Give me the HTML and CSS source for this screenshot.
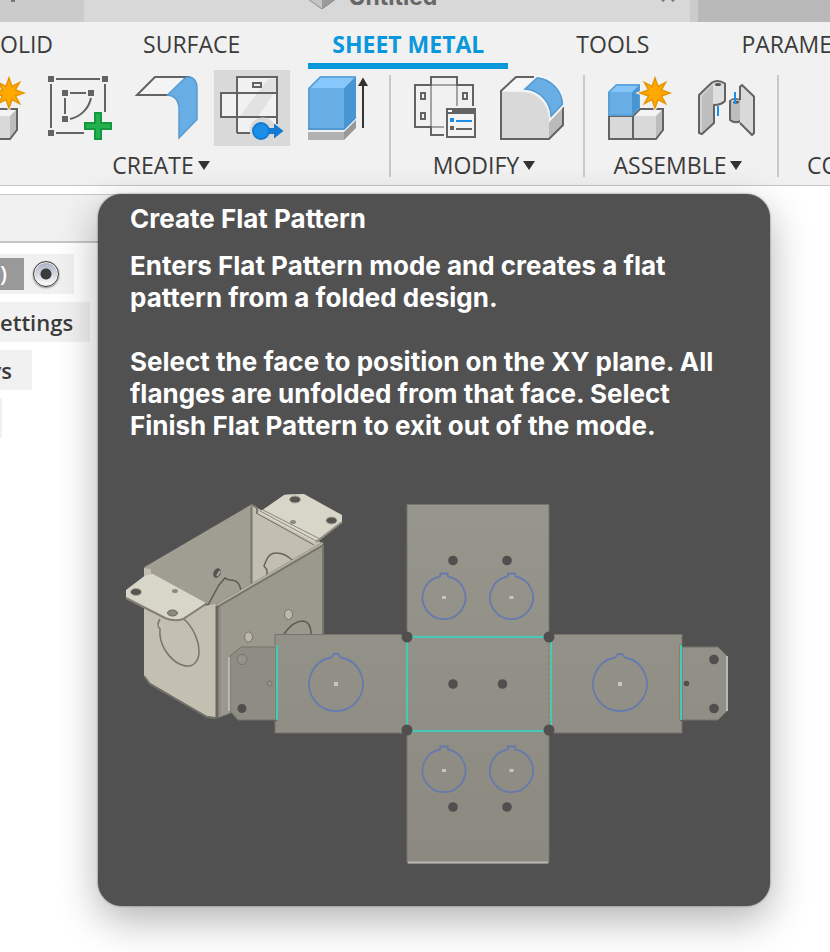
FILE: index.html
```html
<!DOCTYPE html>
<html lang="en">
<head>
<meta charset="utf-8">
<meta name="viewport" content="width=device-width, initial-scale=1">
<title>Untitled</title>
<link rel="stylesheet" href="styles.css">
</head>
<body>
<svg class="sprite" aria-hidden="true">
  <symbol id="new-component" viewBox="0 0 64 64">
    <path d="M1 40V63H25V40z" fill="#d9d9d9" stroke="#636363" stroke-width="2"/>
    <path d="M25 40L33 33H55.500V54L48 63H25z" fill="#d9d9d9"/>
    <path d="M25 40L33 33H55L48 40z" fill="#f4f4f4"/>
    <path d="M48 40L55 33V54L48 63z" fill="#bdbdbd"/>
    <path d="M25 40L32 33H55V54L48 63H25z" fill="none" stroke="#636363" stroke-width="2"/>
    <path d="M0 16H24V40H0z" fill="#68ade4"/>
    <path d="M0 16L8 8H32L24 16z" fill="#86c5f7"/>
    <path d="M24 16L32 8V32L24 40z" fill="#4694d1"/>
    <path d="M1 40V16L8.500 9H31V32L24 39H1" fill="none" stroke="#559cd3" stroke-width="1.500"/>
    <path d="M47 0L50.500 9.500L59 5L54.500 13.500L64 17L54.500 20.500L59 29L50.500 24.500L47 34L43.500 24.500L35 29L39.500 20.500L30 17L39.500 13.500L35 5L43.500 9.500z" fill="#f1f1f1" stroke="#f1f1f1" stroke-width="2"/>
    <path d="M47 2L50 10.500L57.500 6.500L53.500 14L62 17L53.500 20L57.500 27.500L50 23.500L47 32L44 23.500L36.500 27.500L40.500 20L32 17L40.500 14L36.500 6.500L44 10.500z" fill="#ffa800" stroke="#e69500" stroke-width="1.500"/>
  </symbol>
</svg>

<header>
  <div class="doc-tabs">
    <div class="doc-tab doc-tab-side">
      <button class="tab-icon" type="button" aria-label="New document">
        <svg width="14" height="14" viewBox="0 0 14 14"><path d="M7 0V14M0 7H14" stroke="#777" stroke-width="4"/></svg>
      </button>
    </div>
    <div class="doc-tab doc-tab-active">
      <span class="doc-title">
        <svg width="30" height="24" viewBox="0 0 30 24"><path d="M1 9L15 0L29 9V14L15 24L1 14z" fill="#c5c5c5"/><path d="M15 12L29 5V14L15 24z" fill="#9b9b9b"/><path d="M1 14L15 24L29 14" fill="none" stroke="#8a8a8a"/></svg>
        Untitled
      </span>
      <button class="tab-icon" type="button" aria-label="Close">
        <svg width="16" height="14" viewBox="0 0 16 14"><path d="M2 1L14 13M14 1L2 13" stroke="#777" stroke-width="3"/></svg>
      </button>
    </div>
    <div class="doc-tab doc-tab-rest"></div>
  </div>

  <nav class="ribbon-tabs">
    <a href="#" class="first">OLID</a>
    <a href="#">SURFACE</a>
    <a href="#" class="current">SHEET METAL</a>
    <a href="#">TOOLS</a>
    <a href="#">PARAME</a>
  </nav>

  <div class="toolbar">
    <section class="group">
      <div class="tools">
        <button class="tool" type="button" aria-label="New Component"><svg><use href="#new-component"/></svg></button>
        <button class="tool" type="button" aria-label="Create Sketch">
          <svg viewBox="0 0 64 64">
            <path d="M0 0h6v6H0zM54 0h6v6h-6zM0 54h6v6H0zM14 14h6v6h-6zM40 14h6v6h-6zM14 40h6v6h-6z" fill="#636363"/>
            <path d="M8 3H52M3 8V52M57 8V36M8 57H36M22 17H38M17 22V38M43 22A27 27 0 0 1 22 43" fill="none" stroke="#636363" stroke-width="2"/>
            <path d="M47 37h6v10h10v6H53v10h-6V53H37v-6h10z" fill="#25b050" stroke="#149a3e" stroke-width="2"/>
          </svg>
        </button>
        <button class="tool" type="button" aria-label="Flange">
          <svg viewBox="0 0 64 64">
            <path d="M3 19L21 1H54L37 19z" fill="#f4f4f4" stroke="#636363" stroke-width="2"/>
            <path d="M33.500 19L50 3Q53 .7 56 1Q63 3 63 12V43.500L45 62V31Q44 20 33.500 19z" fill="#68ade4" stroke="#559cd3" stroke-width="1.500"/>
          </svg>
        </button>
        <button class="tool hovered" type="button" aria-label="Create Flat Pattern" aria-describedby="tip">
          <svg viewBox="0 0 64 64">
            <path d="M17 1H57V57H17zM1 17H57V41H1z" fill="#f1f1f1"/>
            <path d="M48 3H56V14L38 41H17V44z" fill="#e2e2e2"/>
            <path d="M17 57V1H57V48M17 57H30M1 17H57M1 41H57M1 16V42" fill="none" stroke="#636363" stroke-width="2"/>
            <path d="M33 7H41V11H33z" fill="none" stroke="#636363" stroke-width="2"/>
            <path d="M30 58V52A13 13 0 0 1 54 48L58 48V58z" fill="#d9d9d9"/>
            <path d="M48 52H54V47.500L63.500 55L54 62.500V58H48z" fill="#147bd1"/>
            <circle cx="41" cy="55" r="8" fill="#1a8ee8" stroke="#147bd1" stroke-width="2"/>
          </svg>
        </button>
        <button class="tool" type="button" aria-label="Extrude">
          <svg viewBox="0 0 64 64">
            <path d="M2 56H38V64H2z" fill="#b1b1b1"/><path d="M38 56L50 44V52L38 64z" fill="#999"/>
            <path d="M2 12H38V54H2z" fill="#68ade4"/>
            <path d="M2 12L14 0H50L38 12z" fill="#86c8fb"/>
            <path d="M38 12L50 0V42L38 54z" fill="#4795d3"/>
            <path d="M3 53V12.500L14.500 1H49" fill="none" stroke="#559cd3" stroke-width="1.500"/>
            <path d="M2 53H38L50 41" fill="none" stroke="#4a93cd" stroke-width="1.500"/>
            <path d="M57 52V8" stroke="#333" stroke-width="2"/><path d="M57 1.500L62 10H52z" fill="#333"/>
          </svg>
        </button>
      </div>
      <button class="menu" type="button">CREATE<span class="caret"></span></button>
    </section>

    <section class="group">
      <div class="tools">
        <button class="tool" type="button" aria-label="Sheet Metal Rules">
          <svg viewBox="0 0 64 64">
            <path d="M17 9H43V30M17 9V51H30" fill="none" stroke="#a3a3a3" stroke-width="2"/>
            <path d="M30 59H17V51H1V9H17V1H43V9H59V30" fill="none" stroke="#636363" stroke-width="2"/>
            <path d="M7 17h4v6H7zM49 17h4v6h-4zM7 37h4v6H7z" fill="none" stroke="#636363" stroke-width="2"/>
            <path d="M33 33H61V61H33z" fill="#f3f3f3" stroke="#636363" stroke-width="2"/>
            <path d="M32 32H62V38H32z" fill="#636363"/><path d="M34 34h4v2h-4z" fill="#fff"/>
            <path d="M36 42h4v4h-4zM42 44h16v2H42z" fill="#1a8ee8"/>
            <path d="M36 50h4v4h-4zM42 52h16v2H42z" fill="#636363"/>
          </svg>
        </button>
        <button class="tool" type="button" aria-label="Fillet">
          <svg viewBox="0 0 64 64">
            <path d="M1 15L16 1H36L24 15z" fill="#f6f6f6"/>
            <path d="M1 16H23A27 27 0 0 1 49 43V63H1z" fill="#d9d9d9"/>
            <path d="M49 43L63 30V49L49 63z" fill="#bababa"/>
            <path d="M34 1H16L1 15V63H49L63 49V31" fill="none" stroke="#636363" stroke-width="2"/>
            <path d="M22 14L37 0A30 30 0 0 1 64 29L50 44A28 28 0 0 0 22 14z" fill="#68ade4" stroke="#f4f4f4" stroke-width="2"/>
            <path d="M25 13L37 2A28 28 0 0 1 62.500 28L51 40A28 28 0 0 0 25 13z" fill="#68ade4" stroke="#559cd3" stroke-width="1.500"/>
          </svg>
        </button>
      </div>
      <button class="menu" type="button">MODIFY<span class="caret"></span></button>
    </section>

    <section class="group">
      <div class="tools">
        <button class="tool" type="button" aria-label="New Component"><svg><use href="#new-component"/></svg></button>
        <button class="tool" type="button" aria-label="Joint">
          <svg viewBox="0 0 64 64">
            <path d="M5 19L18 6.500Q24 3 31 7.500V25Q27 29 20 29V47L8 58L5 57z" fill="#d4d4d4"/>
            <path d="M8 20L19 9V47L8 57z" fill="#bebebe"/>
            <path d="M19 9Q24 11 30 9V26Q24 29 19 28z" fill="#dedede"/>
            <path d="M5 19L18 6.500Q24 3 31 7.500V25Q27 29 20 29V47L8 58L5 57z" fill="none" stroke="#636363" stroke-width="2" stroke-linejoin="round"/>
            <ellipse cx="24" cy="8.500" rx="3" ry="1.500" fill="#555"/>
            <path d="M24 30V40" stroke="#1a8ee8" stroke-width="2"/>
            <path d="M36 25Q41 21 47 25V45Q41 48 36 44z" fill="#bdbdbd" stroke="#636363" stroke-width="2"/>
            <path d="M37 25Q41 22 46 25Q42 29 37 25z" fill="#f4f4f4"/>
            <ellipse cx="42" cy="26" rx="3" ry="1.500" fill="#555"/>
            <path d="M46 11L48 9L60 20.500V57L58 59L46 47" fill="#d9d9d9" stroke="#636363" stroke-width="2" stroke-linejoin="round"/>
            <path d="M46 10V24" stroke="#636363" stroke-width="2"/>
            <path d="M41 16V28" stroke="#1a8ee8" stroke-width="2"/>
          </svg>
        </button>
      </div>
      <button class="menu" type="button">ASSEMBLE<span class="caret"></span></button>
    </section>

    <section class="group group-cut">
      <button class="menu" type="button">CO</button>
    </section>
  </div>
</header>

<main class="workspace">
  <aside class="browser">
    <div class="browser-head"></div>
    <ul class="tree">
      <li class="row-root"><span class="chip">)</span><input type="radio" name="active" aria-label="Activate component"></li>
      <li class="row-settings">ettings</li>
      <li class="row-views">ys</li>
      <li class="row-last"></li>
    </ul>
  </aside>

  <div class="tooltip" id="tip" role="tooltip">
    <h2>Create Flat Pattern</h2>
    <p>Enters Flat Pattern mode and creates a flat pattern from a folded design.</p>
    <p>Select the face to position on the XY plane. All flanges are unfolded from that face. Select Finish Flat Pattern to exit out of the mode.</p>
    <svg class="art" viewBox="98 482 672 392" role="img" aria-label="Folded box and its flat pattern">
      <defs>
        <linearGradient id="sheet" gradientUnits="userSpaceOnUse" x1="0" y1="504" x2="0" y2="863">
          <stop offset="0" stop-color="#97968d"/><stop offset="1" stop-color="#8b8980"/>
        </linearGradient>
        <g id="knock-small" fill="none">
          <path d="M-4 -21L-3.500 -24H3.500L4 -21A21.500 21.500 0 1 1 -4 -21z" stroke="#667aad" stroke-width="1.800"/>
          <path d="M-2 -1.500H2V1.500H-2z" fill="#c8c7be"/>
        </g>
        <g id="knock-large" fill="none">
          <path d="M-5 -26.500L-2 -30H2L5 -26.500A27 27 0 1 1 -5 -26.500z" stroke="#667aad" stroke-width="1.800"/>
          <path d="M-2 -2H2V2H-2z" fill="#c8c7be"/>
        </g>
      </defs>

      <!-- folded box -->
      <path d="M144 568L252 505L252 590L218 608L144 580z" fill="#a09d93"/>
      <path d="M252 505L322 543L252 586z" fill="#c2beb0"/>
      <path d="M144 568L252 505L257 508V514" fill="none" stroke="#7e7b73" stroke-width="2"/>
      <path d="M145 568L251 506" stroke="#b5b2a7"/>
      <path d="M251.500 507V587" stroke="#77746b" stroke-width="2"/>
      <path d="M267 575V570L264 566L266 561Q269 553 276 553Q286 553 294 562" fill="none" stroke="#68655c" stroke-width="1.500"/>
      <path d="M208 605L219 585L225 578L229 580Q240 579 241 592" fill="none" stroke="#5d5b54" stroke-width="1.500"/>
      <ellipse cx="217" cy="573" rx="3.500" ry="5" transform="rotate(25 217 573)" fill="#55534e"/>
      <path d="M217 576L220 571" stroke="#aaa79d" stroke-width="2"/>
      <path d="M258 513L284 495Q286 494 304 494L342 515V522L316 543z" fill="#d8d5c9"/>
      <path d="M342 522L316 542" stroke="#8f8c82" stroke-width="2"/>
      <path d="M260 511L318 542M263 510L320 539" stroke="#8c897f"/>
      <path d="M258 514L314 545" stroke="#716e66"/>
      <ellipse cx="295" cy="499.500" rx="5.500" ry="3.500" fill="#56544f" stroke="#aaa79d"/>
      <ellipse cx="331.500" cy="520.500" rx="5.500" ry="3.500" fill="#56544f" stroke="#aaa79d"/>
      <ellipse cx="293" cy="522" rx="3" ry="2" fill="#8d8a80"/>
      <path d="M144 590L170 610L217 604V718L206 716L150 683L144 676z" fill="#c3bfb1"/>
      <path d="M144 676L150 684L207 717L216 718L232 712" fill="none" stroke="#716f67" stroke-width="2"/>
      <path d="M217 607L323 545V660L232 712L217 718z" fill="#9b988e"/>
      <path d="M217 606L323 544" stroke="#77746c" stroke-width="4"/>
      <path d="M217 605L323 543" stroke="#b3b0a4" stroke-width="2"/>
      <path d="M217 606V718" stroke="#67655d" stroke-width="3"/><path d="M220 606V716" stroke="#85827a" stroke-width="1"/>
      <path d="M323 545V640" stroke="#77756d" stroke-width="2"/>
      <path d="M160 619Q156 625 160 629Q159 640 165 650Q176 667 190 666Q202 662 198 643Q194 628 184 619" fill="none" stroke="#77746a" stroke-width="1.500"/>
      <path d="M126 590L147 574L153 574L206 603L183 619Q175 622 165 618L126 598z" fill="#d8d5c9"/>
      <path d="M126 598L165 618Q175 622 183 619L206 604" fill="none" stroke="#827f76" stroke-width="2"/>
      <path d="M144 568V576L151 574V569" fill="#c2beb0"/>
      <ellipse cx="136" cy="592" rx="5.500" ry="3.500" fill="#56544f" stroke="#aaa79d"/>
      <ellipse cx="172.500" cy="613" rx="5" ry="3" fill="#8b887e" stroke="#69665f"/>
      <ellipse cx="175" cy="591" rx="3" ry="2" fill="#8d8a80"/>
      <g fill="#bcb9ab" stroke="#77746b"><ellipse cx="288.500" cy="614.500" rx="4" ry="5"/><ellipse cx="248.500" cy="637" rx="4" ry="5"/></g>
      <path d="M284 634Q293 621 303 621Q311 622 311 634" fill="none" stroke="#5d5b54" stroke-width="1.500"/>

      <!-- flat pattern -->
      <g fill="url(#sheet)" stroke="#74736c">
        <path d="M407 504.500H549V863H407z"/>
        <path d="M276 647H241L230 656V711L238 720H276z" fill="#8e8d84"/>
        <path d="M682 647H718L727 656V711L718 720H682z"/>
        <path d="M407 634.500H275V645H277V721H275V733H407z"/>
        <path d="M549 634.500H682V645H680V721H682V733H549z"/>
        <path d="M406 637H551V731H406z" stroke="none"/>
      </g>
      <path d="M229 657V711M727 656V711M408 862.500H548" stroke="#b8b8b6" stroke-width="2"/>
      <path d="M549 643V725M679.500 646V720" stroke="#a5784c" stroke-dasharray="4 2"/>
      <path d="M407 637H549M407 731H549M407 637V731M551 637V731M277 645V720M681 645V720" stroke="#45c9b8" stroke-width="2"/>
      <g fill="#504f4d">
        <circle cx="407" cy="637" r="5.500"/><circle cx="549" cy="637" r="5.500"/><circle cx="407" cy="730" r="5.500"/><circle cx="549" cy="730" r="5.500"/>
        <circle cx="453" cy="560.500" r="4.800"/><circle cx="507" cy="560.500" r="4.800"/><circle cx="453" cy="684" r="4.800"/><circle cx="502.500" cy="684" r="4.800"/>
        <circle cx="453" cy="807" r="4.800"/><circle cx="507" cy="807" r="4.800"/><circle cx="714" cy="659.500" r="4.800"/><circle cx="714" cy="708.500" r="4.800"/>
        <circle cx="686.500" cy="683.500" r="2.800"/><circle cx="242" cy="708.500" r="4.500"/>
      </g>
      <g fill="#96948a" stroke="#74726b"><circle cx="242" cy="659.500" r="5"/><circle cx="269.500" cy="683.500" r="2.500"/></g>
      <use href="#knock-small" x="444" y="597.500"/><use href="#knock-small" x="511.500" y="597.500"/>
      <use href="#knock-small" x="444" y="770.500"/><use href="#knock-small" x="511.500" y="770.500"/>
      <use href="#knock-large" x="336" y="684"/><use href="#knock-large" x="620" y="684"/>
    </svg>
  </div>
</main>
</body>
</html>
```
FILE: styles.css
```css
* {
  box-sizing: border-box;
}

body {
  margin: 0;
  min-height: 100vh;
  display: flex;
  flex-direction: column;
  overflow: hidden;
  background: #fff;
  color: #3b3b3b;
  font: 500 23px/32px "Open Sans", "Noto Sans", sans-serif;
}

button {
  border: 0;
  padding: 0;
  background: none;
  color: inherit;
  font: inherit;
}

.sprite {
  position: absolute;
  width: 0;
  height: 0;
}

/* Document tabs, scrolled partly out of view */
.doc-tabs {
  display: flex;
  height: 22px;
  overflow: hidden;
  background: #cbcbcb;
}

.doc-tab {
  display: flex;
  align-items: center;
  height: 50px;
  margin-top: -28px;
}

.doc-tab-side {
  width: 84px;
  padding-left: 6px;
}

.doc-tab-active {
  flex: 1;
  justify-content: flex-end;
  padding-right: 14px;
  background: #d8d8d8;
}

.doc-title {
  display: flex;
  align-items: center;
  gap: 12px;
  margin: 0 auto;
  color: #666;
  font-family: Inter, sans-serif;
  font-weight: 700;
}

.doc-tab-rest {
  width: 132px;
  margin-left: 8px;
  background: #b9b9b9;
}

.tab-icon {
  display: flex;
  padding-bottom: 4px;
}

/* Ribbon */
.ribbon-tabs {
  display: flex;
  gap: 44px;
  height: 47px;
  overflow: hidden;
  background: #f1f1f1;
}

.ribbon-tabs a {
  flex: none;
  padding: 6px 24px 0;
  border-bottom: 6px solid transparent;
  color: inherit;
  text-decoration: none;
}

.ribbon-tabs .first {
  padding-left: 0;
  padding-right: 22px;
}

.ribbon-tabs .current {
  border-color: #0a97db;
  color: #0a97db;
  font-weight: 700;
}

.toolbar {
  display: flex;
  padding: 1px 0 4px;
  overflow: hidden;
  border-bottom: 1px solid #c4c4c4;
  background: #f1f1f1;
}

.group {
  flex: none;
  display: flex;
  flex-direction: column;
  align-items: center;
  padding: 0 15px 0 17px;
  background: linear-gradient(#c9c9c9, #c9c9c9) right 5px / 2px 102px no-repeat;
}

.group:first-child {
  margin-left: -61px;
}

.group-cut {
  justify-content: flex-end;
  padding-left: 28px;
  background: none;
}

.tools {
  display: flex;
  gap: 10px;
}

.tool {
  width: 76px;
  height: 76px;
  padding: 6px;
}

.tool svg {
  display: block;
  width: 64px;
  height: 64px;
}

.hovered {
  background: #d9d9d9;
}

.menu {
  display: flex;
  align-items: center;
  gap: 4px;
  height: 32px;
  margin-top: 3px;
  padding-right: 10px;
}

.caret {
  border: 6px solid transparent;
  border-top: 9px solid #333;
  border-bottom: 0;
}

/* Workspace */
.workspace {
  position: relative;
  flex: 1;
  padding-top: 8px;
}

.browser {
  width: 300px;
  border-top: 1px solid #c9c9c9;
}

.browser-head {
  height: 48px;
  border-bottom: 2px solid #c6c6c6;
  background: #f1f1f1;
}

.tree {
  display: flex;
  flex-direction: column;
  align-items: flex-start;
  gap: 8px;
  margin: 0;
  padding: 11px 0 0;
  font-size: 22px;
  font-weight: 600;
  list-style: none;
}

.tree li {
  display: flex;
  align-items: center;
  justify-content: flex-end;
  height: 40px;
  overflow: hidden;
  background: #f1f1f1;
}

.row-root {
  gap: 9px;
  padding-right: 15px;
}

.chip {
  width: 24px;
  height: 32px;
  background: #999;
  color: #fff;
  line-height: 30px;
}

.row-root input {
  appearance: none;
  width: 26px;
  height: 26px;
  margin: 0;
  border: 1px solid #3b3b3b;
  border-radius: 50%;
  background: radial-gradient(circle, #3b3b3b 5px, transparent 6px), linear-gradient(#a9b0c2, #fff);
  box-shadow: inset 0 0 0 1px #eee, 0 1px 2px #888;
}

.row-settings {
  padding-right: 17px;
}

.row-views {
  width: 32px;
  padding-right: 20px;
}

.row-last {
  width: 2px;
}

/* Command tooltip */
.tooltip {
  position: absolute;
  top: 8px;
  left: 98px;
  right: 60px;
  padding: 9px 32px 32px;
  border-radius: 24px;
  background: #515151;
  box-shadow: 0 0 2px rgba(0, 0, 0, 0.6), 0 14px 40px rgba(0, 0, 0, 0.3);
  color: #fff;
  font: 700 26px/32px Inter, sans-serif;
}

.tooltip h2 {
  margin: 0 0 15px;
  font: inherit;
}

.tooltip p {
  margin: 0 0 32px;
}

.art {
  display: block;
  width: calc(100% + 64px);
  margin: 40px -32px 0;
}
```
